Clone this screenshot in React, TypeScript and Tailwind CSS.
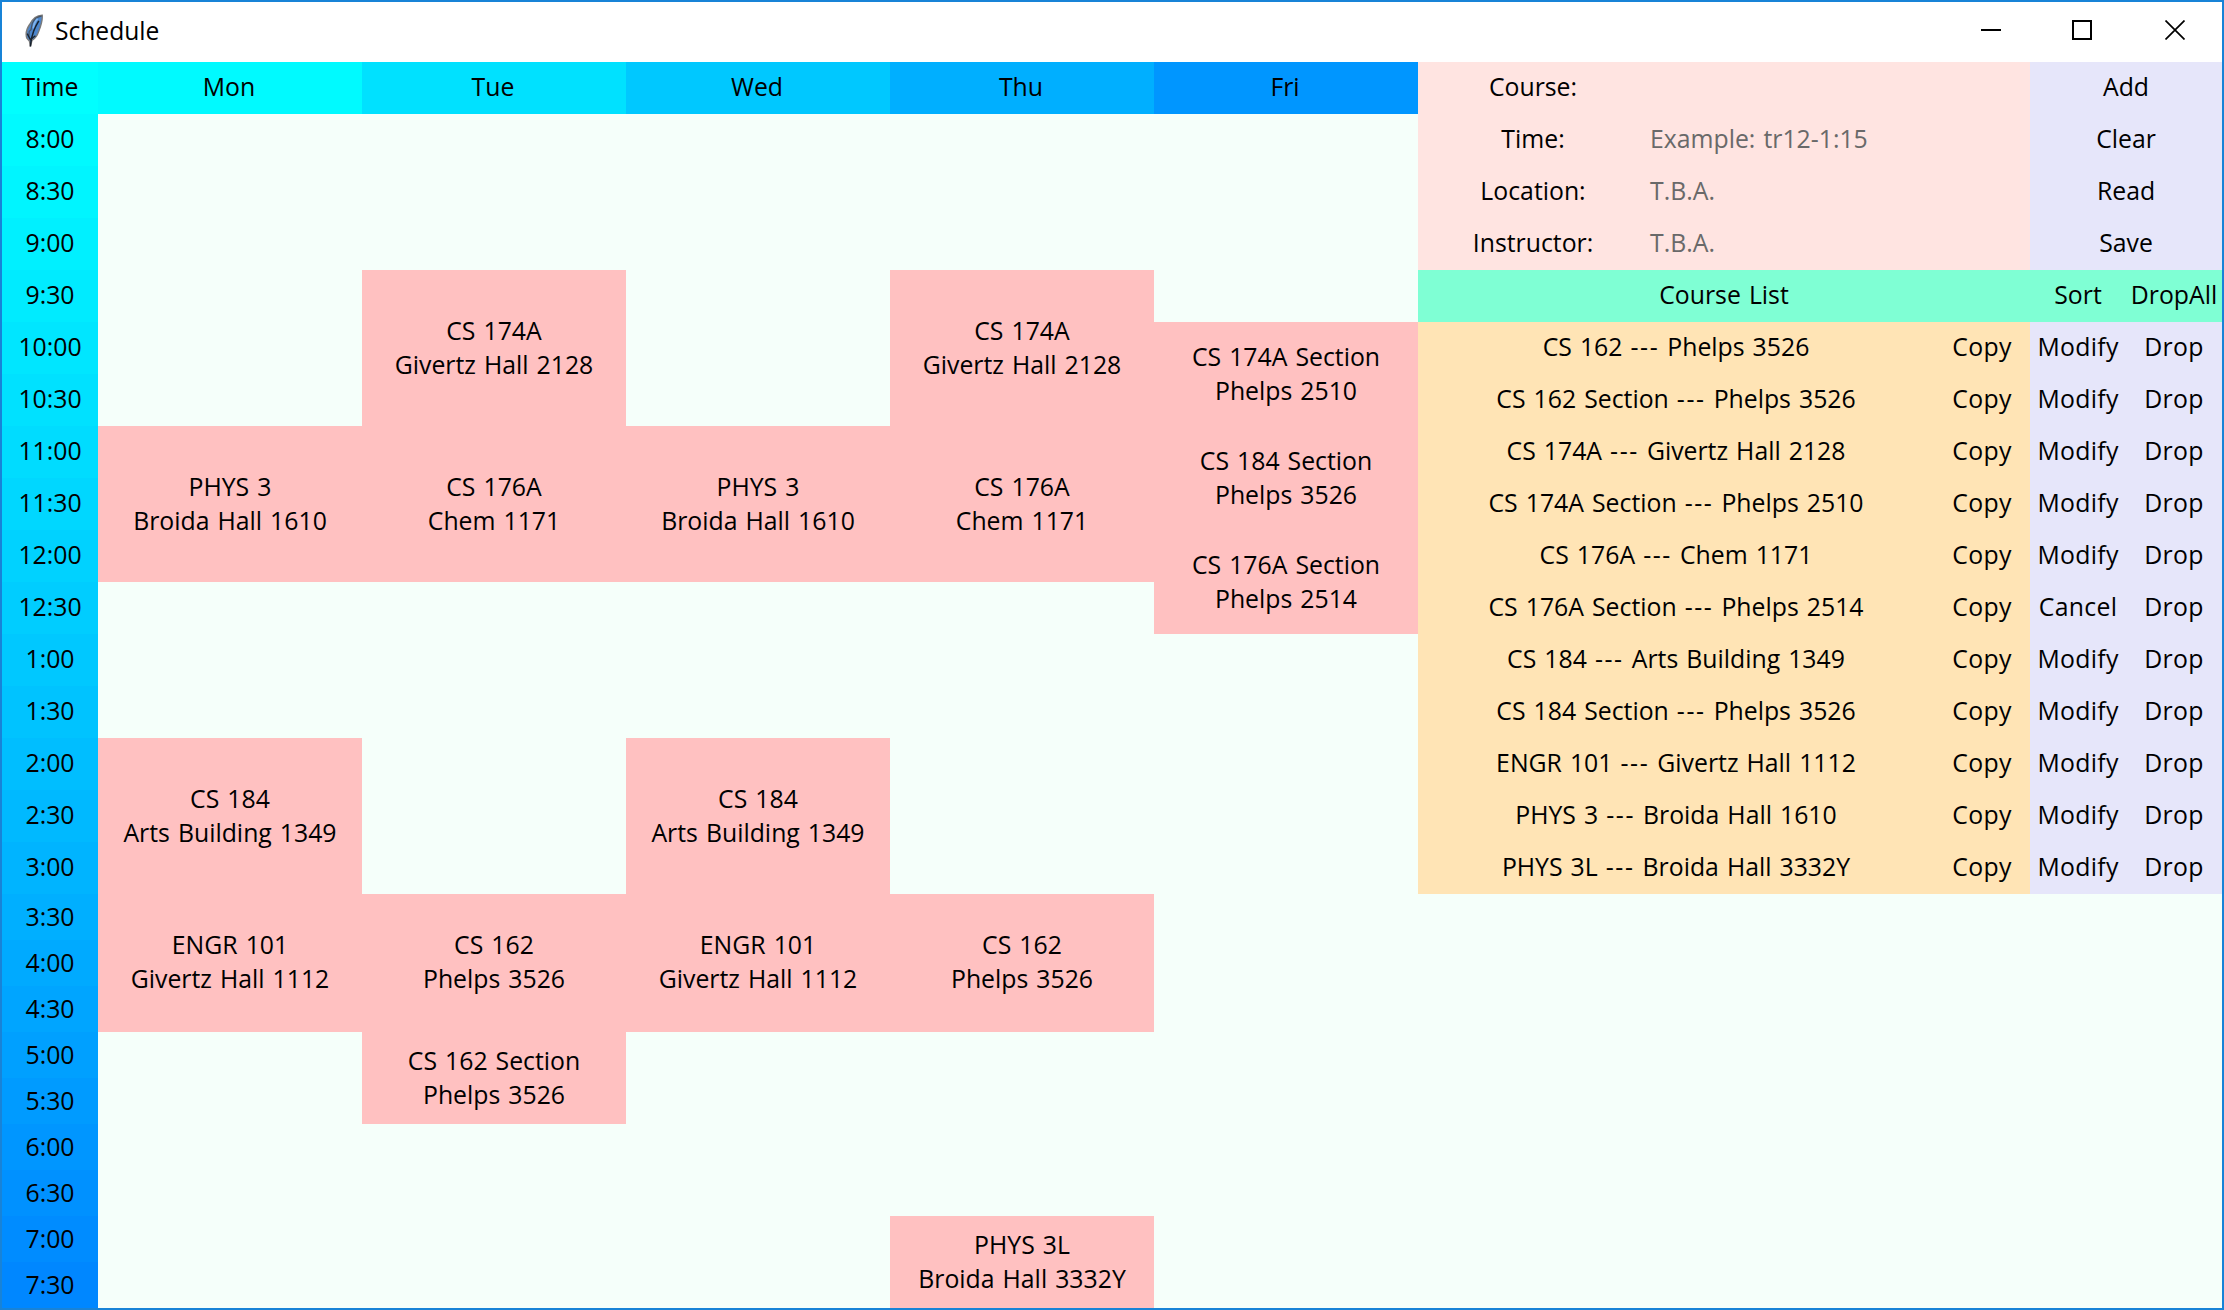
import React from 'react';

const days = [
  { name: 'Mon', bg: 'bg-[#00faff]' },
  { name: 'Tue', bg: 'bg-[#00e1ff]' },
  { name: 'Wed', bg: 'bg-[#00c8ff]' },
  { name: 'Thu', bg: 'bg-[#00afff]' },
  { name: 'Fri', bg: 'bg-[#0096ff]' },
];

const times = [
  'Time', '8:00', '8:30', '9:00', '9:30', '10:00', '10:30', '11:00', '11:30', '12:00', '12:30',
  '1:00', '1:30', '2:00', '2:30', '3:00', '3:30', '4:00', '4:30', '5:00', '5:30', '6:00', '6:30',
  '7:00', '7:30',
];

type Meeting = { title: string; place: string; cell: string };

const meetings: Meeting[] = [
  { title: 'PHYS 3', place: 'Broida Hall 1610', cell: 'col-start-2 row-start-8 row-span-3 pb-0.5' },
  { title: 'CS 184', place: 'Arts Building 1349', cell: 'col-start-2 row-start-14 row-span-3 pb-0.5' },
  { title: 'ENGR 101', place: 'Givertz Hall 1112', cell: 'col-start-2 row-start-17 row-span-3 pb-1' },
  { title: 'CS 174A', place: 'Givertz Hall 2128', cell: 'col-start-3 row-start-5 row-span-3 pb-0.5' },
  { title: 'CS 176A', place: 'Chem 1171', cell: 'col-start-3 row-start-8 row-span-3 pb-0.5' },
  { title: 'CS 162', place: 'Phelps 3526', cell: 'col-start-3 row-start-17 row-span-3 pb-1' },
  { title: 'CS 162 Section', place: 'Phelps 3526', cell: 'col-start-3 row-start-20 row-span-2 pb-0.5' },
  { title: 'PHYS 3', place: 'Broida Hall 1610', cell: 'col-start-4 row-start-8 row-span-3 pb-0.5' },
  { title: 'CS 184', place: 'Arts Building 1349', cell: 'col-start-4 row-start-14 row-span-3 pb-0.5' },
  { title: 'ENGR 101', place: 'Givertz Hall 1112', cell: 'col-start-4 row-start-17 row-span-3 pb-1' },
  { title: 'CS 174A', place: 'Givertz Hall 2128', cell: 'col-start-5 row-start-5 row-span-3 pb-0.5' },
  { title: 'CS 176A', place: 'Chem 1171', cell: 'col-start-5 row-start-8 row-span-3 pb-0.5' },
  { title: 'CS 162', place: 'Phelps 3526', cell: 'col-start-5 row-start-17 row-span-3 pb-1' },
  { title: 'PHYS 3L', place: 'Broida Hall 3332Y', cell: 'col-start-5 row-start-24 row-span-2 pb-0.5' },
  { title: 'CS 174A Section', place: 'Phelps 2510', cell: 'col-start-6 row-start-6 row-span-2 pb-0.5' },
  { title: 'CS 184 Section', place: 'Phelps 3526', cell: 'col-start-6 row-start-8 row-span-2 pb-0.5' },
  { title: 'CS 176A Section', place: 'Phelps 2514', cell: 'col-start-6 row-start-10 row-span-2 pb-0.5' },
];

const fields = [
  { label: 'Course:', hint: '' },
  { label: 'Time:', hint: 'Example: tr12-1:15' },
  { label: 'Location:', hint: 'T.B.A.' },
  { label: 'Instructor:', hint: 'T.B.A.' },
];

const courses = [
  ['CS 162', 'Phelps 3526'],
  ['CS 162 Section', 'Phelps 3526'],
  ['CS 174A', 'Givertz Hall 2128'],
  ['CS 174A Section', 'Phelps 2510'],
  ['CS 176A', 'Chem 1171'],
  ['CS 176A Section', 'Phelps 2514'],
  ['CS 184', 'Arts Building 1349'],
  ['CS 184 Section', 'Phelps 3526'],
  ['ENGR 101', 'Givertz Hall 1112'],
  ['PHYS 3', 'Broida Hall 1610'],
  ['PHYS 3L', 'Broida Hall 3332Y'],
];

const editing = 'CS 176A Section';

function Cell({ className = '', children }: { className?: string; children?: React.ReactNode }) {
  return (
    <div className={`flex items-center justify-center whitespace-nowrap ${className}`}>
      {children}
    </div>
  );
}

function Feather() {
  return (
    <svg width="20" height="34" viewBox="0 0 20 34" fill="none">
      <path d="M18.2 1.2C13 1.4 8.4 5 5.6 10.5C2.6 15 1.4 20.5 3 24.4L5.4 27L6.4 32.4L8 26.4C11 24.6 13.4 21.4 14.6 17.6C16.2 13.4 18.8 7.4 18.2 1.2Z" fill="#4c86cc" stroke="#7a7a7a" strokeWidth="1.4" />
      <path d="M17.6 2.2C12.6 2.8 9.6 6.4 8.2 9.6L7 15.6L5.2 17.4L4.8 22.6" stroke="#4a5462" strokeWidth="1.2" />
      <path d="M13.6 4.6C10.8 7.4 9.6 11 9.4 14.4" stroke="#7fb4ee" strokeWidth="1.8" />
      <path d="M14.8 6.8C12.6 10.4 10.8 13.6 9.6 17.2C8.2 21 6.6 26 6.4 32.4" stroke="#16202c" strokeWidth="1.5" />
      <path d="M3.2 19.6L6.4 25.6L11.4 21.8" stroke="#1d2631" strokeWidth="1.4" />
    </svg>
  );
}

function TitleBar() {
  return (
    <div className="flex h-15 shrink-0 items-start justify-between bg-white">
      <div className="flex items-start">
        <div className="ml-[22px] mt-3">
          <Feather />
        </div>
        <span className="ml-[11px] mt-3 text-[24.6px] leading-[34px]">Schedule</span>
      </div>
      <div className="mr-[37px] mt-[18px] flex">
        <svg width="20" height="20" viewBox="0 0 20 20" className="mr-[71px]">
          <path d="M0 10H20" stroke="#000" strokeWidth="2" />
        </svg>
        <svg width="20" height="20" viewBox="0 0 20 20" className="mr-[73px]">
          <path d="M1 1H19V19H1Z" fill="none" stroke="#000" strokeWidth="2" />
        </svg>
        <svg width="20" height="20" viewBox="0 0 20 20">
          <path d="M0.5 0.5L19.5 19.5M19.5 0.5L0.5 19.5" stroke="#000" strokeWidth="1.7" />
        </svg>
      </div>
    </div>
  );
}

function Timetable() {
  return (
    <div className="grid grid-cols-[96px_repeat(5,264px)] grid-rows-[repeat(16,52px)_repeat(9,46px)]">
      <div className="col-start-1 row-start-1 row-span-full grid grid-rows-subgrid">
        {times.map((time, i) => (
          <div
            key={time}
            className={`flex items-center justify-center ${i < 16 ? 'pb-1' : 'pb-0.5'}`}
            style={{ backgroundColor: `rgb(0, ${255 - 5 * i}, 255)` }}
          >
            {time}
          </div>
        ))}
      </div>
      <div className="col-start-2 col-span-5 row-start-1 grid grid-cols-subgrid">
        {days.map((day) => (
          <Cell key={day.name} className={`pb-1 pr-0.5 ${day.bg}`}>
            {day.name}
          </Cell>
        ))}
      </div>
      {meetings.map((m) => (
        <div
          key={m.cell}
          className={`flex flex-col items-center justify-center whitespace-nowrap bg-[#ffc1c1] ${m.cell}`}
        >
          <div>{m.title}</div>
          <div>{m.place}</div>
        </div>
      ))}
    </div>
  );
}

function CoursePanel() {
  return (
    <div className="flex w-[804px] flex-col">
      <div className="flex">
        <div className="w-[612px] bg-[#ffe4e1]">
          {fields.map((f) => (
            <div key={f.label} className="flex h-13 items-center pb-1">
              <div className="w-[230px] text-center">{f.label}</div>
              <div className="pl-0.5 text-[#696969]">{f.hint}</div>
            </div>
          ))}
        </div>
        <div className="w-48 bg-[#e6e6fa]">
          {['Add', 'Clear', 'Read', 'Save'].map((action) => (
            <Cell key={action} className="h-13 pb-1">{action}</Cell>
          ))}
        </div>
      </div>
      <div className="flex h-13 bg-[#7fffd4]">
        <Cell className="w-[612px] pb-1">Course List</Cell>
        <Cell className="w-24 pb-1">Sort</Cell>
        <Cell className="w-24 pb-1">DropAll</Cell>
      </div>
      {courses.map(([name, place]) => (
        <div key={name} className="flex h-13">
          <Cell className="w-[516px] bg-[#ffe4b5] pb-1">
            <span>
              {name} <span className="tracking-[1.6px]">---</span> {place}
            </span>
          </Cell>
          <Cell className="w-24 bg-[#ffe4b5] pb-1 tracking-[0.3px]">Copy</Cell>
          <Cell className="w-24 bg-[#e6e6fa] pb-1 tracking-[0.3px]">
            {name === editing ? 'Cancel' : 'Modify'}
          </Cell>
          <Cell className="w-24 bg-[#e6e6fa] pb-1 tracking-[0.3px]">Drop</Cell>
        </div>
      ))}
    </div>
  );
}

export default function App() {
  return (
    <div className="flex h-[1310px] w-[2224px] flex-col overflow-hidden border-2 border-[#1883d7] bg-[#f5fffa] font-['Open_Sans',sans-serif] text-[24.8px] leading-[34px] text-black [word-spacing:1.6px]">
      <TitleBar />
      <div className="flex">
        <Timetable />
        <CoursePanel />
      </div>
    </div>
  );
}
